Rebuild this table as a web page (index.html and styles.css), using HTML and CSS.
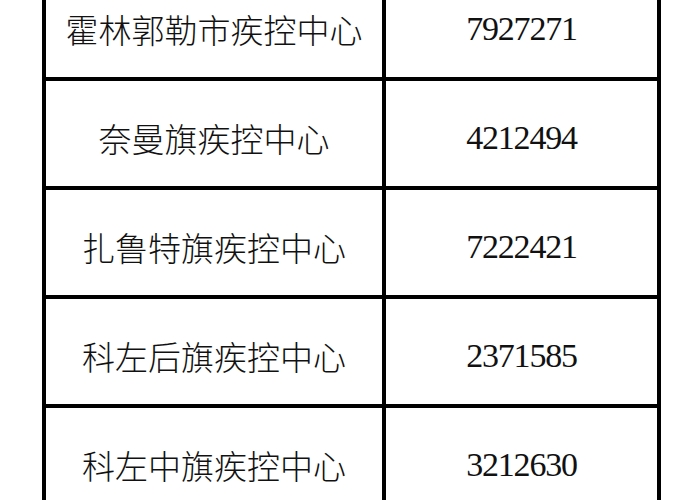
FILE: index.html
```html
<!DOCTYPE html>
<html lang="zh-CN">
<head>
<meta charset="utf-8">
<link rel="stylesheet" href="styles.css">
</head>
<body>
<div class="table">
  <div class="cell name">霍林郭勒市疾控中心</div>
  <div class="cell num">7927271</div>
  <div class="cell name">奈曼旗疾控中心</div>
  <div class="cell num">4212494</div>
  <div class="cell name">扎鲁特旗疾控中心</div>
  <div class="cell num">7222421</div>
  <div class="cell name">科左后旗疾控中心</div>
  <div class="cell num">2371585</div>
  <div class="cell name">科左中旗疾控中心</div>
  <div class="cell num">3212630</div>
</div>
</body>
</html>
```
FILE: styles.css
```css
html, body {
  margin: 0;
  padding: 0;
  background: #fff;
}
body {
  width: 700px;
  height: 500px;
  overflow: hidden;
}
.table {
  display: grid;
  grid-template-columns: 336px 271px;
  grid-auto-rows: 105px;
  gap: 4px;
  background: #000;
  border: 4px solid #000;
  width: fit-content;
  margin-left: 42px;
  margin-top: -32px;
}
.cell {
  background: #fff;
  display: flex;
  align-items: center;
  justify-content: center;
  color: #111;
  line-height: 1;
  padding-top: 9px;
  box-sizing: border-box;
}
.name {
  font-family: "Noto Sans CJK SC", sans-serif;
  font-size: 33px;
  font-weight: 300;
}
.num {
  font-family: "Liberation Serif", serif;
  font-size: 34px;
  letter-spacing: -1.2px;
}
```
